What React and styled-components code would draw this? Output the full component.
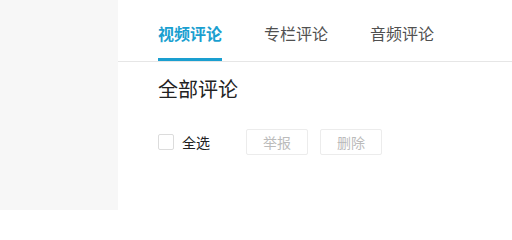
import styled, { createGlobalStyle } from "styled-components";

const GlobalStyle = createGlobalStyle`
  html, body {
    margin: 0;
    padding: 0;
    background: #fff;
  }
  body {
    font-family: "Noto Sans CJK SC", "Noto Sans", sans-serif;
  }
`;

const Page = styled.div`
  display: flex;
  width: 512px;
  height: 210px;
  overflow: hidden;
`;

const Sidebar = styled.aside`
  width: 118px;
  flex-shrink: 0;
  background: #f7f7f7;
`;

const Main = styled.main`
  flex: 1;
  background: #fff;
`;

const TabBar = styled.nav`
  display: flex;
  gap: 42px;
  height: 61px;
  padding-left: 40px;
  border-bottom: 1px solid #e6e6e6;
`;

const Tab = styled.div`
  position: relative;
  padding-top: 22px;
  font-size: 16px;
  line-height: 22px;
  color: ${(p) => (p.active ? "#1a9fd0" : "#505050")};
  font-weight: ${(p) => (p.active ? 700 : 400)};
  cursor: pointer;

  &::after {
    content: "";
    display: ${(p) => (p.active ? "block" : "none")};
    position: absolute;
    left: 0;
    right: 0;
    bottom: 0;
    height: 3px;
    background: #1a9fd0;
  }
`;

const Content = styled.section`
  padding-left: 40px;
`;

const Title = styled.h2`
  margin: 13px 0 0;
  font-size: 20px;
  line-height: 28px;
  font-weight: 400;
  color: #222;
`;

const Toolbar = styled.div`
  display: flex;
  align-items: center;
  margin-top: 26px;
`;

const CheckLabel = styled.label`
  display: flex;
  align-items: center;
  gap: 8px;
  font-size: 14px;
  color: #222;
  margin-right: 36px;
  cursor: pointer;
`;

const CheckBox = styled.span`
  width: 14px;
  height: 14px;
  border: 1px solid #dcdcdc;
  border-radius: 2px;
  background: #fff;
`;

const Button = styled.button`
  width: 62px;
  height: 26px;
  margin-right: 12px;
  padding: 0;
  border: 1px solid #ececec;
  border-radius: 2px;
  background: #fff;
  color: #bbbbbb;
  font-family: inherit;
  font-size: 14px;
  line-height: 24px;
`;

export default function App() {
  const tabs = ["视频评论", "专栏评论", "音频评论"];
  return (
    <>
      <GlobalStyle />
      <Page>
        <Sidebar />
        <Main>
          <TabBar>
            {tabs.map((t, i) => (
              <Tab key={t} active={i === 0}>
                {t}
              </Tab>
            ))}
          </TabBar>
          <Content>
            <Title>全部评论</Title>
            <Toolbar>
              <CheckLabel>
                <CheckBox />
                全选
              </CheckLabel>
              <Button disabled>举报</Button>
              <Button disabled>删除</Button>
            </Toolbar>
          </Content>
        </Main>
      </Page>
    </>
  );
}
